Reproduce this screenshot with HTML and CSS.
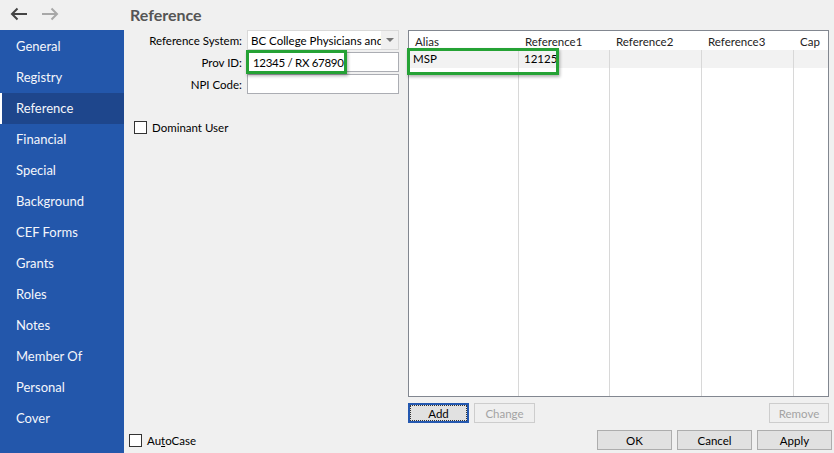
FILE: index.html
```html
<!DOCTYPE html>
<html lang="en">
<head>
  <meta charset="UTF-8">
  <title>Reference</title>
  <link rel="stylesheet" href="styles.css">
</head>
<body>
  <div class="window">
    <div class="nav-arrows">
      <svg width="18" height="14" viewBox="0 0 18 14"><path d="M17 7H2M7.5 1.5L2 7l5.5 5.5" fill="none" stroke="#444" stroke-width="2"/></svg>
      <svg width="18" height="14" viewBox="0 0 18 14"><path d="M1 7h15M10.5 1.5L16 7l-5.5 5.5" fill="none" stroke="#a8a8a8" stroke-width="2"/></svg>
    </div>
    <div class="page-title">Reference</div>

    <ul class="sidebar">
      <li>General</li>
      <li>Registry</li>
      <li class="active">Reference</li>
      <li>Financial</li>
      <li>Special</li>
      <li>Background</li>
      <li>CEF Forms</li>
      <li>Grants</li>
      <li>Roles</li>
      <li>Notes</li>
      <li>Member Of</li>
      <li>Personal</li>
      <li>Cover</li>
    </ul>

    <div class="content">
      <div class="main">
        <div class="form">
          <div class="fields">
            <label>Reference System:</label>
            <div class="select">
              <span>BC College Physicians and Surgeons</span>
              <i class="drop"></i>
            </div>
            <label>Prov ID:</label>
            <div class="field-wrap">
              <input type="text" value="12345 / RX 67890">
              <div class="highlight hl-prov"></div>
            </div>
            <label>NPI Code:</label>
            <input type="text" value="">
          </div>
          <label class="check dominant"><span class="box"></span><span>Dominant User</span></label>
        </div>

        <div class="refs">
          <div class="grid">
            <div class="grid-head">
              <div>Alias</div>
              <div>Reference1</div>
              <div>Reference2</div>
              <div>Reference3</div>
              <div>Cap</div>
            </div>
            <div class="grid-body">
              <div class="col"><div class="cell">MSP</div></div>
              <div class="col"><div class="cell">12125</div></div>
              <div class="col"><div class="cell"></div></div>
              <div class="col"><div class="cell"></div></div>
              <div class="col"><div class="cell"></div></div>
              <div class="highlight hl-row"></div>
            </div>
          </div>
          <div class="grid-actions">
            <button class="btn focus">Add</button>
            <button class="btn" disabled>Change</button>
            <button class="btn push" disabled>Remove</button>
          </div>
        </div>
      </div>

      <div class="footer">
        <label class="check"><span class="box"></span><span>Au<u>t</u>oCase</span></label>
        <div class="dialog-buttons">
          <button class="btn wide">OK</button>
          <button class="btn wide">Cancel</button>
          <button class="btn wide">Apply</button>
        </div>
      </div>
    </div>
  </div>
</body>
</html>
```

FILE: styles.css
```css
* {
  margin: 0;
  padding: 0;
  box-sizing: border-box;
}

body {
  font-family: "Segoe UI", Lato, "Noto Sans", sans-serif;
  font-size: 11.5px;
  color: #000;
  background-color: #f0f0f0;
  width: 834px;
  height: 453px;
  overflow: hidden;
}

.window {
  display: grid;
  grid-template-columns: 124px 1fr;
  grid-template-rows: 30px 1fr;
  height: 453px;
}

.nav-arrows {
  display: flex;
  align-items: center;
  gap: 13px;
  padding-left: 10px;
  padding-bottom: 2px;
}

.page-title {
  padding-left: 6px;
  font-size: 16px;
  font-weight: 700;
  color: #555;
  line-height: 30px;
}

/* left navigation */
.sidebar {
  list-style: none;
  background-color: #2357ab;
  padding-top: 1px;
}

.sidebar li {
  height: 31px;
  line-height: 31px;
  padding-left: 16px;
  font-size: 13px;
  color: #f4f6fb;
}

.sidebar li.active {
  background-color: #1e468c;
  border-left: 2px solid #fff;
  padding-left: 14px;
}

/* right side */
.content {
  display: flex;
  flex-direction: column;
}

.main {
  flex: 1;
  display: flex;
}

.form {
  width: 284px;
}

.fields {
  display: grid;
  grid-template-columns: 118px 152px;
  column-gap: 5px;
  row-gap: 2px;
  align-items: center;
}

.fields label {
  text-align: right;
}

.fields input,
.select {
  height: 20px;
  width: 152px;
  border: 1px solid #abadb3;
  background-color: #fff;
  font-family: inherit;
  font-size: 11.5px;
  padding: 0 5px;
  outline: none;
}

.field-wrap input {
  letter-spacing: -0.3px;
}

.select {
  display: flex;
  align-items: center;
  padding: 0 0 0 3px;
  border-color: #d9d9d9;
  overflow: hidden;
}

.select span {
  flex: 1;
  white-space: nowrap;
  overflow: hidden;
}

.drop {
  width: 17px;
  height: 18px;
  background-color: #f0f0f0;
  position: relative;
}

.drop::after {
  content: "";
  position: absolute;
  left: 5px;
  top: 7px;
  border-left: 4px solid transparent;
  border-right: 4px solid transparent;
  border-top: 4px solid #777;
}

.field-wrap {
  position: relative;
  height: 20px;
}

.highlight {
  position: absolute;
  border: 3px solid #25a235;
  box-shadow: 1px 2px 3px rgba(0, 0, 0, 0.3);
  pointer-events: none;
}

.hl-prov {
  left: -1px;
  top: -2px;
  width: 101px;
  height: 24px;
}

.check {
  display: flex;
  align-items: center;
  gap: 5px;
}

.box {
  width: 13px;
  height: 13px;
  border: 1px solid #333;
  background-color: #fff;
}

.dominant {
  margin-top: 27px;
  margin-left: 10px;
}

.refs {
  flex: 1;
  display: flex;
  flex-direction: column;
  margin-right: 5px;
}

.grid {
  height: 367px;
  border: 1px solid #828790;
  background-color: #fff;
  display: flex;
  flex-direction: column;
}

.grid-head,
.grid-body {
  display: grid;
  grid-template-columns: 110px 91px 92px 92px 1fr;
}

.grid-head div {
  height: 19px;
  line-height: 21px;
  padding-left: 6px;
  color: #222;
  white-space: nowrap;
  overflow: hidden;
}

.grid-body {
  flex: 1;
  position: relative;
}

.col {
  border-right: 1px solid #d8d8d8;
}

.col:nth-child(5) {
  border-right: none;
}

.cell {
  height: 18px;
  line-height: 18px;
  padding-left: 4px;
  background-color: #f2f2f2;
}

.col:nth-child(2) .cell {
  padding-left: 5px;
}

.hl-row {
  left: -2px;
  top: -2px;
  width: 152px;
  height: 27px;
}

.grid-actions {
  display: flex;
  gap: 5px;
  margin-top: 6px;
}

.btn {
  height: 20px;
  width: 61px;
  font-family: inherit;
  font-size: 11.5px;
  color: #000;
  background-color: #e1e1e1;
  border: 1px solid #adadad;
}

.btn:disabled {
  color: #a3a3a3;
  background-color: #efefef;
  border-color: #cdcdcd;
}

.btn.focus {
  border: 2px solid #2458b0;
  outline: 1px dotted #333;
  outline-offset: -3px;
}

.btn.push {
  margin-left: auto;
  width: 60px;
}

.footer {
  display: flex;
  align-items: center;
  justify-content: space-between;
  height: 20px;
  margin: 7px 0 3px 5px;
}

.dialog-buttons {
  display: flex;
  gap: 5px;
  margin-right: 2px;
}

.btn.wide {
  width: 75px;
}
```
